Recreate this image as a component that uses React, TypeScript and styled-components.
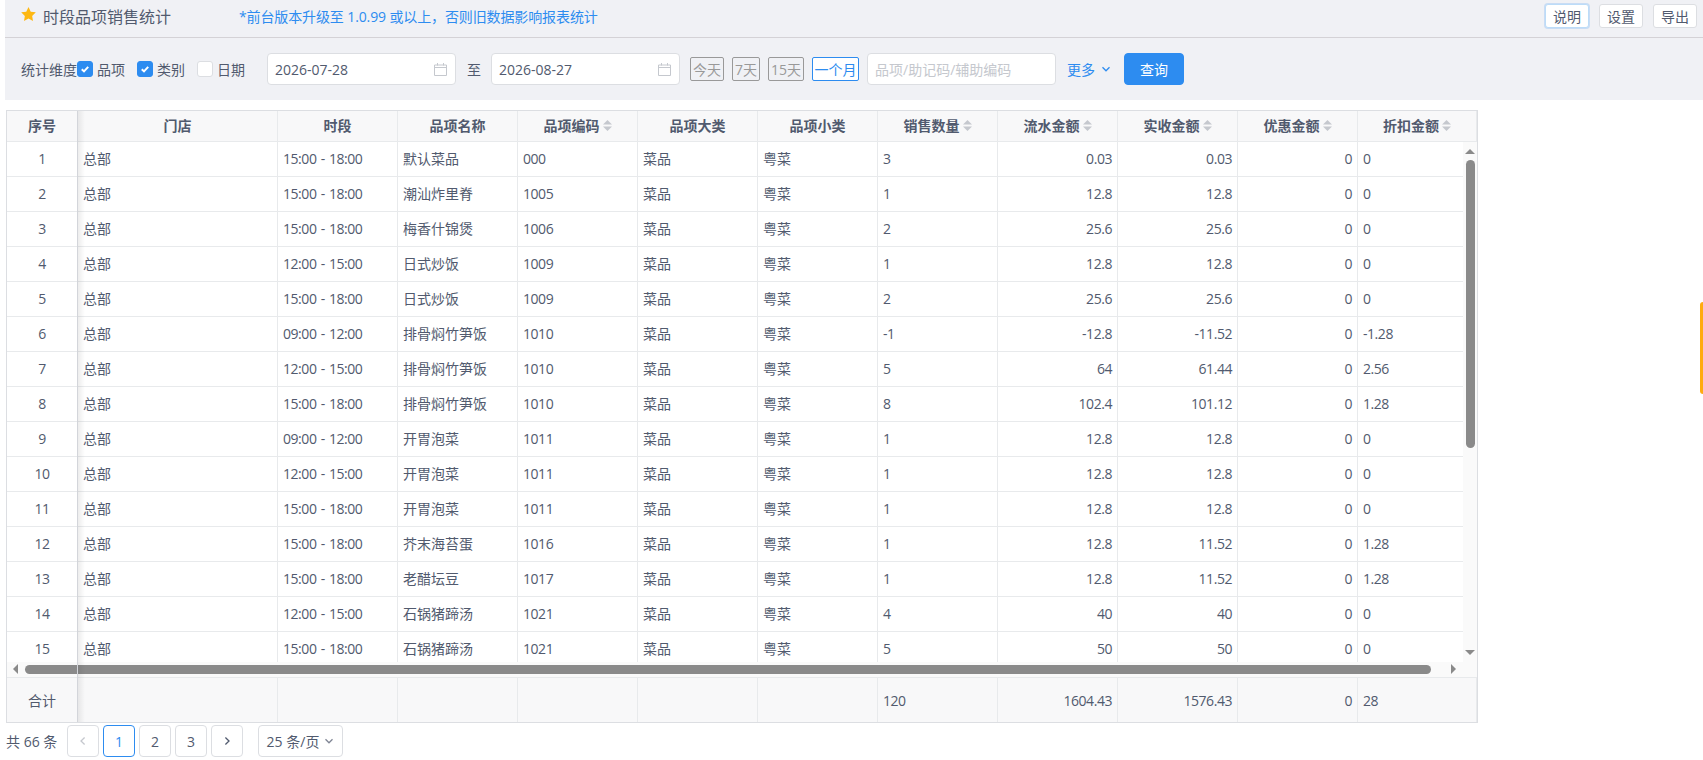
import styled, {createGlobalStyle} from "styled-components";

const GlobalStyle = createGlobalStyle`
  html, body {
    margin: 0;
    padding: 0;
    background: #fff;
    overflow: hidden;
  }
  body {
    font-family: "Open Sans", "Noto Sans CJK SC", sans-serif;
    font-size: 14px;
    color: #515a6e;
  }
  * {
    box-sizing: border-box;
  }
`;

const COLS = "71px 200px repeat(9, 120px) 119px";

const Page = styled.div`
  width: 1703px;
  height: 760px;
  overflow: hidden;
  position: relative;
`;

const TopBar = styled.div`
  margin-left: 5px;
  height: 38px;
  padding: 0 6px 6px 17px;
  display: flex;
  align-items: center;
  background: #f0f1f5;
  border-bottom: 1px solid #d4d2d6;
`;

const StarIcon = styled.svg`
  margin: 0 0 4px -1px;
`;

const Title = styled.span`
  margin-left: 7px;
  font-size: 16px;
  color: #515a6e;
  width: 196px;
`;

const Notice = styled.span`
  font-size: 14px;
  letter-spacing: -0.12px;
  color: #2d8cf0;
`;

const TopActions = styled.div`
  margin-left: auto;
  display: flex;
  gap: 10px;
`;

const TopButton = styled.button<{$focus?: boolean}>`
  width: 44px;
  height: 24px;
  padding: 0;
  font: inherit;
  color: #515a6e;
  background: #fff;
  border: 1px solid ${(p) => (p.$focus ? "#bcdcf8" : "#dcdee2")};
  border-radius: 3px;
  box-shadow: ${(p) => (p.$focus ? "0 0 0 1px rgba(45, 140, 240, 0.2)" : "none")};
`;

const FilterBar = styled.div`
  margin-left: 5px;
  height: 62px;
  padding-left: 16px;
  display: flex;
  align-items: center;
  background: #f0f1f5;
`;

const Check = styled.span<{$on?: boolean}>`
  width: 16px;
  height: 16px;
  display: inline-flex;
  align-items: center;
  justify-content: center;
  border-radius: 3px;
  background: ${(p) => (p.$on ? "#2d8cf0" : "#fff")};
  border: 1px solid ${(p) => (p.$on ? "#2d8cf0" : "#dcdee2")};
`;

const CheckLabel = styled.label`
  display: inline-flex;
  align-items: center;
  gap: 4px;
  margin-right: 12px;
`;

const Field = styled.div<{$w: number}>`
  width: ${(p) => p.$w}px;
  height: 32px;
  padding: 0 8px 0 7px;
  display: flex;
  align-items: center;
  justify-content: space-between;
  background: #fff;
  border: 1px solid #dcdee2;
  border-radius: 4px;
`;

const DateGroup = styled.div`
  display: flex;
  align-items: center;
  margin-left: 10px;
  margin-right: 10px;
`;

const To = styled.span`
  margin: 0 10px 0 11px;
`;

const Placeholder = styled.span`
  color: #c5c8ce;
`;

const Chips = styled.div`
  display: flex;
  gap: 8px;
  margin-right: 8px;
`;

const Chip = styled.span<{$on?: boolean}>`
  height: 24px;
  padding: 0 ${(p) => (p.$on ? "1.5px" : "2px")};
  display: flex;
  align-items: center;
  border-radius: 2px;
  color: ${(p) => (p.$on ? "#2d8cf0" : "#999")};
  background: ${(p) => (p.$on ? "#fff" : "transparent")};
  border: 1px solid ${(p) => (p.$on ? "#2d8cf0" : "#999")};
`;

const MoreLink = styled.span`
  margin: 0 13px 0 11px;
  display: inline-flex;
  align-items: center;
  gap: 6px;
  color: #2d8cf0;
`;

const QueryButton = styled.button`
  width: 60px;
  height: 32px;
  padding: 0;
  font: inherit;
  color: #fff;
  background: #2d8cf0;
  border: 1px solid #2d8cf0;
  border-radius: 4px;
`;

const TableFrame = styled.div`
  position: relative;
  margin: 10px 0 0 6px;
  width: 1472px;
  height: 613px;
  border: 1px solid #dcdee2;
`;

const ColumnShadow = styled.div`
  position: absolute;
  top: 0;
  bottom: 0;
  left: 70px;
  width: 8px;
  border-left: 1px solid #d3d5da;
  background: linear-gradient(to right, rgba(0, 0, 0, 0.07), rgba(0, 0, 0, 0));
  pointer-events: none;
`;

const GridRow = styled.div`
  display: grid;
  grid-template-columns: ${COLS};
`;

const HeadRow = styled(GridRow)`
  height: 31px;
  background: #f8f8f9;
  border-bottom: 1px solid #e8eaec;
`;

const HeadCell = styled.div`
  display: flex;
  align-items: center;
  justify-content: center;
  gap: 3px;
  padding-bottom: 2px;
  font-weight: 700;
  border-right: 1px solid #e8eaec;
`;

const Body = styled.div`
  display: flex;
  height: 520px;
`;

const Rows = styled.div`
  width: 1456px;
  overflow: hidden;
  background: #fff;
`;

const BodyRow = styled(GridRow)`
  height: 35px;
  border-bottom: 1px solid #e8eaec;

  & > div {
    padding-bottom: 2px;
  }
`;

const Cell = styled.div<{$align?: string}>`
  display: flex;
  align-items: center;
  justify-content: ${(p) => p.$align || "flex-start"};
  padding: 0 5px;
  white-space: nowrap;
  border-right: 1px solid #e8eaec;
`;

// digits in the reference run a little narrower than Open Sans
const NumCell = styled(Cell)`
  letter-spacing: -0.45px;
  word-spacing: 1px;
`;

const VTrack = styled.div`
  width: 14px;
  display: flex;
  flex-direction: column;
  align-items: center;
  padding: 7px 0 7px;
  background: #fafafa;
`;

const VThumb = styled.div`
  width: 9px;
  height: 288px;
  margin-top: 6px;
  margin-bottom: auto;
  border-radius: 5px;
  background: #8a8a8a;
`;

const HTrack = styled.div`
  height: 16px;
  padding: 0 14px 1px 6px;
  display: flex;
  align-items: center;
  background: #fafafa;
  border-bottom: 1px solid #e8eaec;
`;

const HThumb = styled.div`
  width: 1406px;
  height: 9px;
  margin: 0 20px 0 7px;
  border-radius: 5px;
  background: #8a8a8a;
`;

const FootRow = styled(GridRow)`
  height: 44px;
  background: #f8f8f9;
`;

const Pager = styled.div`
  margin: 2px 0 0 6px;
  display: flex;
  align-items: center;
  gap: 4px;
`;

const Total = styled.span`
  width: 57px;
`;

const PageButton = styled.span<{$on?: boolean}>`
  width: 32px;
  height: 32px;
  display: flex;
  align-items: center;
  justify-content: center;
  border-radius: 4px;
  background: #fff;
  color: ${(p) => (p.$on ? "#2d8cf0" : "#515a6e")};
  border: 1px solid ${(p) => (p.$on ? "#2d8cf0" : "#dcdee2")};
`;

const SizeSelect = styled.span`
  width: 85px;
  height: 32px;
  margin-left: 11px;
  display: flex;
  align-items: center;
  justify-content: center;
  gap: 5px;
  border: 1px solid #dcdee2;
  border-radius: 4px;
`;

const EdgeTab = styled.div`
  position: absolute;
  right: 0;
  top: 302px;
  width: 3px;
  height: 92px;
  border-radius: 3px 0 0 3px;
  background: #ffab0f;
`;

const Star = () => (
  <StarIcon width="15" height="14" viewBox="0 0 24 23">
    <path d="M12 0l3.7 7.6 8.3 1.2-6 5.9 1.4 8.3L12 19l-7.4 4L6 14.7 0 8.8l8.3-1.2z" fill="#fdb813" />
  </StarIcon>
);

const Tick = () => (
  <svg width="10" height="10" viewBox="0 0 10 10" fill="none">
    <path d="M1.8 5.2l2.2 2.2 4.2-4.6" stroke="#fff" strokeWidth="2" />
  </svg>
);

const CalendarIcon = () => (
  <svg width="13" height="13" viewBox="0 0 13 13" fill="none" stroke="#c5c8ce">
    <path d="M.5 2h12v10.5H.5zM.5 4.5h12M3.5 0v2.5M9.5 0v2.5" />
  </svg>
);

const Chevron = ({color = "#2d8cf0", dir = "down"}: {color?: string; dir?: string}) => (
  <svg width="10" height="10" viewBox="0 0 10 10" fill="none" stroke={color} strokeWidth="1.3">
    {dir === "down" && <path d="M1.5 3.2L5 6.8l3.5-3.6" />}
    {dir === "left" && <path d="M6.6 1.5L3 5l3.6 3.5" />}
    {dir === "right" && <path d="M3.4 1.5L7 5 3.4 8.5" />}
  </svg>
);

const SortIcon = () => (
  <svg width="9" height="11" viewBox="0 0 9 11" fill="#c5c8ce">
    <path d="M4.5 0L9 4.6H0zM0 6.4h9L4.5 11z" />
  </svg>
);

const Arrow = ({dir}: {dir: "up" | "down" | "left" | "right"}) => {
  const vertical = dir === "up" || dir === "down";
  const d = {up: "M5 0l5 5H0z", down: "M0 0h10L5 5z", left: "M5 0v10L0 5z", right: "M0 0l5 5-5 5z"}[dir];
  return (
    <svg width={vertical ? 10 : 5} height={vertical ? 5 : 10} viewBox={vertical ? "0 0 10 5" : "0 0 5 10"} fill="#8a8a8a" style={{flexShrink: 0}}>
      <path d={d} />
    </svg>
  );
};

const HEADERS: [string, boolean][] = [
  ["序号", false],
  ["门店", false],
  ["时段", false],
  ["品项名称", false],
  ["品项编码", true],
  ["品项大类", false],
  ["品项小类", false],
  ["销售数量", true],
  ["流水金额", true],
  ["实收金额", true],
  ["优惠金额", true],
  ["折扣金额", true],
];

const T9 = "09:00 - 12:00";
const T12 = "12:00 - 15:00";
const T15 = "15:00 - 18:00";

const DATA: string[][] = [
  [T15, "默认菜品", "000", "3", "0.03", "0.03", "0"],
  [T15, "潮汕炸里脊", "1005", "1", "12.8", "12.8", "0"],
  [T15, "梅香什锦煲", "1006", "2", "25.6", "25.6", "0"],
  [T12, "日式炒饭", "1009", "1", "12.8", "12.8", "0"],
  [T15, "日式炒饭", "1009", "2", "25.6", "25.6", "0"],
  [T9, "排骨焖竹笋饭", "1010", "-1", "-12.8", "-11.52", "-1.28"],
  [T12, "排骨焖竹笋饭", "1010", "5", "64", "61.44", "2.56"],
  [T15, "排骨焖竹笋饭", "1010", "8", "102.4", "101.12", "1.28"],
  [T9, "开胃泡菜", "1011", "1", "12.8", "12.8", "0"],
  [T12, "开胃泡菜", "1011", "1", "12.8", "12.8", "0"],
  [T15, "开胃泡菜", "1011", "1", "12.8", "12.8", "0"],
  [T15, "芥末海苔蛋", "1016", "1", "12.8", "11.52", "1.28"],
  [T15, "老醋坛豆", "1017", "1", "12.8", "11.52", "1.28"],
  [T12, "石锅猪蹄汤", "1021", "4", "40", "40", "0"],
  [T15, "石锅猪蹄汤", "1021", "5", "50", "50", "0"],
];

const App = () => {
  return (
    <Page>
      <GlobalStyle />
      <TopBar>
        <Star />
        <Title>时段品项销售统计</Title>
        <Notice>*前台版本升级至 1.0.99 或以上，否则旧数据影响报表统计</Notice>
        <TopActions>
          <TopButton $focus>说明</TopButton>
          <TopButton>设置</TopButton>
          <TopButton>导出</TopButton>
        </TopActions>
      </TopBar>

      <FilterBar>
        <span>统计维度</span>
        <CheckLabel>
          <Check $on><Tick /></Check>品项
        </CheckLabel>
        <CheckLabel>
          <Check $on><Tick /></Check>类别
        </CheckLabel>
        <CheckLabel>
          <Check />日期
        </CheckLabel>
        <DateGroup>
          <Field $w={189}>2026-07-28<CalendarIcon /></Field>
          <To>至</To>
          <Field $w={189}>2026-08-27<CalendarIcon /></Field>
        </DateGroup>
        <Chips>
          <Chip>今天</Chip>
          <Chip>7天</Chip>
          <Chip>15天</Chip>
          <Chip $on>一个月</Chip>
        </Chips>
        <Field $w={189}><Placeholder>品项/助记码/辅助编码</Placeholder></Field>
        <MoreLink>更多<Chevron /></MoreLink>
        <QueryButton>查询</QueryButton>
      </FilterBar>

      <TableFrame>
        <HeadRow>
          {HEADERS.map(([name, sortable]) => (
            <HeadCell key={name}>
              {name}
              {sortable && <SortIcon />}
            </HeadCell>
          ))}
        </HeadRow>
        <Body>
          <Rows>
            {DATA.map((row, i) => (
              <BodyRow key={i}>
                <NumCell $align="center">{i + 1}</NumCell>
                <Cell>总部</Cell>
                <NumCell>{row[0]}</NumCell>
                <Cell>{row[1]}</Cell>
                <NumCell>{row[2]}</NumCell>
                <Cell>菜品</Cell>
                <Cell>粤菜</Cell>
                <NumCell>{row[3]}</NumCell>
                <NumCell $align="flex-end">{row[4]}</NumCell>
                <NumCell $align="flex-end">{row[5]}</NumCell>
                <NumCell $align="flex-end">0</NumCell>
                <NumCell>{row[6]}</NumCell>
              </BodyRow>
            ))}
          </Rows>
          <VTrack>
            <Arrow dir="up" />
            <VThumb />
            <Arrow dir="down" />
          </VTrack>
        </Body>
        <HTrack>
          <Arrow dir="left" />
          <HThumb />
          <Arrow dir="right" />
        </HTrack>
        <FootRow>
          <Cell $align="center">合计</Cell>
          <Cell />
          <Cell />
          <Cell />
          <Cell />
          <Cell />
          <Cell />
          <NumCell>120</NumCell>
          <NumCell $align="flex-end">1604.43</NumCell>
          <NumCell $align="flex-end">1576.43</NumCell>
          <NumCell $align="flex-end">0</NumCell>
          <NumCell>28</NumCell>
        </FootRow>
        <ColumnShadow />
      </TableFrame>

      <Pager>
        <Total>共 66 条</Total>
        <PageButton><Chevron color="#c5c8ce" dir="left" /></PageButton>
        <PageButton $on>1</PageButton>
        <PageButton>2</PageButton>
        <PageButton>3</PageButton>
        <PageButton><Chevron color="#515a6e" dir="right" /></PageButton>
        <SizeSelect>25 条/页<Chevron color="#808695" /></SizeSelect>
      </Pager>

      <EdgeTab />
    </Page>
  );
};

export default App;
